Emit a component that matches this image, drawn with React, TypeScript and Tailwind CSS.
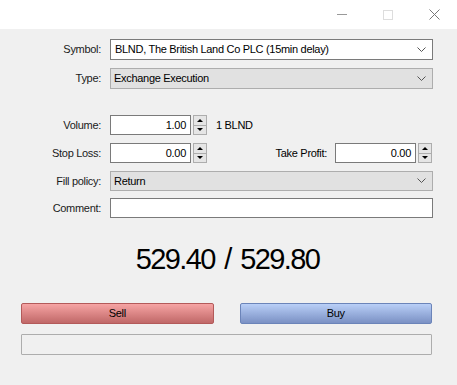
import React from "react";

const font = { fontFamily: '"Liberation Sans", Arial, sans-serif' };

function Chevron() {
  return (
    <svg width="9" height="6" viewBox="0 0 9 6" className="shrink-0">
      <path d="M0.5 0.5 L4.5 4.5 L8.5 0.5" fill="none" stroke="#555" strokeWidth="1" />
    </svg>
  );
}

function Spinner() {
  return (
    <div className="ml-[2px] flex h-full w-[14px] flex-col border border-[#adadad] bg-[#e5e5e5]">
      <div className="flex flex-1 items-center justify-center border-b border-[#adadad]">
        <div className="h-0 w-0 border-x-[3px] border-b-[3px] border-x-transparent border-b-black" />
      </div>
      <div className="flex flex-1 items-center justify-center">
        <div className="h-0 w-0 border-x-[3px] border-t-[3px] border-x-transparent border-t-black" />
      </div>
    </div>
  );
}

function Label({ children }: { children: React.ReactNode }) {
  return <div className="w-[101px] shrink-0 text-right text-[#1a1a1a]">{children}</div>;
}

export default function App() {
  return (
    <div
      className="h-[385px] w-[457px] overflow-hidden bg-[#f0f0f0] text-[11px] tracking-[-0.3px] text-black"
      style={font}
    >
      {/* Title bar */}
      <div className="flex h-[29px] items-center justify-end bg-white">
        <div className="flex w-[46px] items-center justify-center">
          <div className="h-px w-[10px] bg-[#999]" />
        </div>
        <div className="flex w-[46px] items-center justify-center">
          <div className="h-[10px] w-[10px] border border-[#ddd]" />
        </div>
        <div className="flex w-[46px] items-center justify-center">
          <svg width="11" height="11" viewBox="0 0 11 11">
            <path d="M0.5 0.5 L10.5 10.5 M10.5 0.5 L0.5 10.5" stroke="#777" strokeWidth="1" />
          </svg>
        </div>
      </div>

      <div className="flex flex-col pr-[24px]">
        {/* Symbol */}
        <div className="mt-[10px] flex h-[21px] items-center">
          <Label>Symbol:</Label>
          <div className="ml-[9px] flex h-full flex-1 items-center justify-between border border-[#7a7a7a] bg-white pl-[4px] pr-[6px]">
            <span>BLND, The British Land Co PLC (15min delay)</span>
            <Chevron />
          </div>
        </div>

        {/* Type */}
        <div className="mt-[8px] flex h-[21px] items-center">
          <Label>Type:</Label>
          <div className="ml-[9px] flex h-full flex-1 items-center justify-between border border-[#adadad] bg-[#e1e1e1] pl-[3px] pr-[6px]">
            <span>Exchange Execution</span>
            <Chevron />
          </div>
        </div>

        {/* Volume */}
        <div className="mt-[26px] flex h-[20px] items-center">
          <Label>Volume:</Label>
          <div className="ml-[9px] flex h-full w-[81px] items-center justify-end border border-[#7a7a7a] bg-white pr-[4px]">
            1.00
          </div>
          <Spinner />
          <span className="ml-[9px]">1 BLND</span>
        </div>

        {/* Stop Loss / Take Profit */}
        <div className="mt-[8px] flex h-[20px] items-center pr-[1px]">
          <Label>Stop Loss:</Label>
          <div className="ml-[9px] flex h-full w-[81px] items-center justify-end border border-[#7a7a7a] bg-white pr-[4px]">
            0.00
          </div>
          <Spinner />
          <div className="flex-1 pr-[8px] text-right">Take Profit:</div>
          <div className="flex h-full w-[81px] items-center justify-end border border-[#7a7a7a] bg-white pr-[4px]">
            0.00
          </div>
          <Spinner />
        </div>

        {/* Fill policy */}
        <div className="mt-[8px] flex h-[20px] items-center">
          <Label>Fill policy:</Label>
          <div className="ml-[9px] flex h-full flex-1 items-center justify-between border border-[#adadad] bg-[#e1e1e1] pl-[3px] pr-[6px]">
            <span>Return</span>
            <Chevron />
          </div>
        </div>

        {/* Comment */}
        <div className="mt-[7px] flex h-[20px] items-center">
          <Label>Comment:</Label>
          <div className="ml-[9px] h-full flex-1 border border-[#7a7a7a] bg-white" />
        </div>
      </div>

      {/* Price */}
      <div className="mt-[24px] pr-[2px] text-center text-[29px] leading-[34px] tracking-[-1.6px] text-black [word-spacing:3px]">
        529.40 / 529.80
      </div>

      {/* Buttons */}
      <div className="mt-[27px] flex gap-[26px] pl-[21px] pr-[25px]">
        <div className="flex h-[21px] flex-1 items-center justify-center rounded-[2px] border border-[#b35a5a] bg-gradient-to-b from-[#f6a4a4] to-[#c06868]">
          Sell
        </div>
        <div className="flex h-[21px] flex-1 items-center justify-center rounded-[2px] border border-[#6b84b9] bg-gradient-to-b from-[#b9cff7] to-[#7b91c4]">
          Buy
        </div>
      </div>

      {/* Status */}
      <div className="ml-[21px] mt-[10px] h-[21px] w-[411px] rounded-[1px] border border-[#adadad]" />
    </div>
  );
}
